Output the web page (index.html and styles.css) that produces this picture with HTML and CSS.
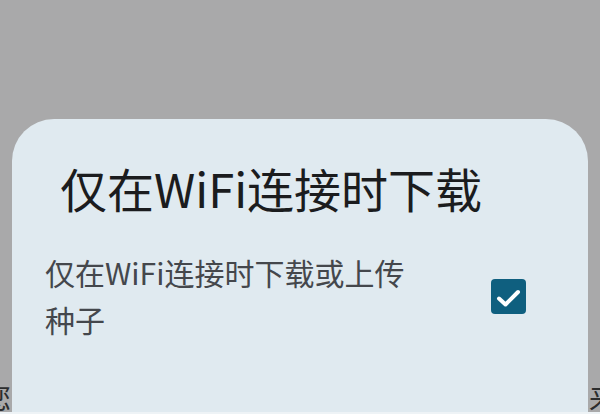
FILE: index.html
```html
<!DOCTYPE html>
<html lang="zh-CN">
<head>
    <meta charset="UTF-8">
    <meta name="viewport" content="width=device-width, initial-scale=1.0">
    <title>设置</title>
    <link rel="stylesheet" href="styles.css">
</head>
<body>

<div class="fondo">
    <div class="fila-fondo">
        <span class="char-izq">您</span>
        <span class="char-der">来</span>
    </div>
    <div class="barra-inferior"></div>
</div>

<div class="dialogo">
    <h2 class="titulo">仅在WiFi连接时下载</h2>
    <div class="opcion">
        <p class="texto">仅在WiFi连接时下载或上传种子</p>
        <span class="casilla">
            <svg width="35" height="35" viewBox="0 0 35 35">
                <path d="M8 19.5 L14.5 25.5 L27 13" fill="none" stroke="#ffffff" stroke-width="4" stroke-linecap="round" stroke-linejoin="round"/>
            </svg>
        </span>
    </div>
</div>

</body>
</html>
```

FILE: styles.css
```css
body {
    margin: 0;
    padding: 0;
    width: 600px;
    height: 414px;
    overflow: hidden;
    position: relative;
    background-color: #a9a9aa;
    font-family: "Noto Sans CJK SC", "Noto Sans", sans-serif;
}
.fondo {
    height: 414px;
    display: flex;
    flex-direction: column;
    justify-content: flex-end;
}
.fila-fondo {
    display: flex;
    justify-content: space-between;
    height: 30px;
    font-size: 28px;
    line-height: 30px;
    color: #2c2d2e;
}
.char-izq {
    margin-left: -17px;
}
.char-der {
    margin-right: -17px;
}
.barra-inferior {
    height: 2px;
    background-color: #eef3f6;
}
.dialogo {
    position: absolute;
    left: 12px;
    top: 119px;
    width: 576px;
    height: 293px;
    background-color: #e0eaf0;
    border-radius: 42px 42px 0 0;
}
.titulo {
    margin: 42px 0 0 48px;
    font-size: 47px;
    line-height: 54px;
    font-weight: 400;
    color: #1b1c1e;
}
.opcion {
    display: flex;
    align-items: center;
    margin-top: 34px;
    padding-left: 33px;
}
.texto {
    margin: 0;
    width: 382px;
    font-size: 30px;
    line-height: 47px;
    color: #44474c;
}
.casilla {
    display: block;
    width: 35px;
    height: 35px;
    margin-left: 64px;
    border-radius: 4px;
    background-color: #0f5f7f;
}
.casilla svg {
    display: block;
}
```
